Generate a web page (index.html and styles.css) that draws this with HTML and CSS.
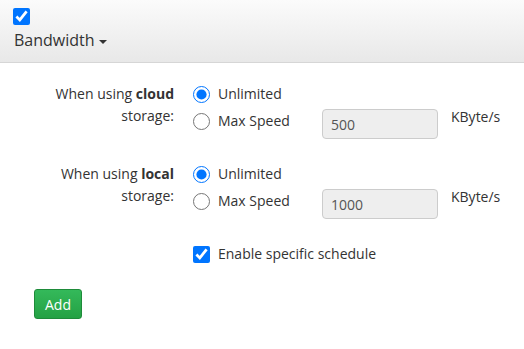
FILE: index.html
```html
<!DOCTYPE html>
<html lang="en">
<head>
    <meta charset="UTF-8">
    <title>Bandwidth</title>
    <link rel="stylesheet" href="styles.css">
</head>
<body>
    <div class="panel-heading">
        <input type="checkbox" class="head-check" checked>
        <div class="panel-title">Bandwidth <span class="caret"></span></div>
    </div>

    <div class="panel-body">
        <div class="form-group">
            <div class="group-label">When using <b>cloud</b><br>storage:</div>
            <div class="group-controls">
                <label class="option"><input type="radio" name="cloud" checked> Unlimited</label>
                <div class="option-row">
                    <label class="option speed"><input type="radio" name="cloud"> Max Speed</label>
                    <input type="text" class="speed-input" value="500" disabled>
                    <span class="unit">KByte/s</span>
                </div>
            </div>
        </div>

        <div class="form-group">
            <div class="group-label">When using <b>local</b><br>storage:</div>
            <div class="group-controls">
                <label class="option"><input type="radio" name="local" checked> Unlimited</label>
                <div class="option-row">
                    <label class="option speed"><input type="radio" name="local"> Max Speed</label>
                    <input type="text" class="speed-input" value="1000" disabled>
                    <span class="unit">KByte/s</span>
                </div>
            </div>
        </div>

        <div class="form-group schedule">
            <div class="group-label"></div>
            <div class="group-controls">
                <label class="option"><input type="checkbox" checked> Enable specific schedule</label>
            </div>
        </div>

        <button class="btn-add">Add</button>
    </div>
</body>
</html>
```

FILE: styles.css
```css
body {
    margin: 0;
    font-family: 'Open Sans', 'Liberation Sans', sans-serif;
    font-size: 14px;
    color: #333;
    background: #fff;
}
.panel-heading {
    height: 63px;
    box-sizing: border-box;
    padding: 7px 13px 0;
    background: linear-gradient(to bottom, #fbfbfb, #e8e8e8);
    border-bottom: 1px solid #d6d6d6;
}
.head-check {
    display: block;
    width: 17px;
    height: 17px;
    margin: 1px 0 0 0;
}
.panel-title {
    font-size: 16px;
    line-height: 22px;
    margin-top: 4px;
    margin-left: 1px;
    color: #333;
}
.caret {
    display: inline-block;
    width: 0;
    height: 0;
    vertical-align: middle;
    border-top: 4px solid #333;
    border-left: 4px solid transparent;
    border-right: 4px solid transparent;
}
.panel-body {
    padding: 20px 0 0 34px;
}
.form-group {
    display: grid;
    grid-template-columns: 140px auto;
    column-gap: 19px;
    margin-bottom: 24px;
}
.form-group.schedule {
    margin-top: 1px;
}
.group-label {
    text-align: right;
    line-height: 22px;
}
.group-label b {
    font-weight: 700;
}
.group-controls {
    display: flex;
    flex-direction: column;
}
.option {
    display: flex;
    align-items: center;
    line-height: 22px;
}
.option input {
    width: 17px;
    height: 17px;
    margin: 0 8px 0 0;
}
.option-row {
    display: flex;
    align-items: flex-start;
}
.option.speed {
    width: 129px;
    padding-top: 5px;
}
.speed-input {
    width: 116px;
    height: 30px;
    box-sizing: border-box;
    margin-top: 4px;
    padding: 0 8px;
    border: 1px solid #ccc;
    border-radius: 4px;
    background: #eee;
    color: #555;
    font-family: inherit;
    font-size: 14px;
}
.unit {
    margin-left: 13px;
    padding-top: 1px;
    line-height: 22px;
}
.btn-add {
    width: 48px;
    height: 30px;
    padding: 0;
    font-family: inherit;
    font-size: 14px;
    color: #fff;
    background: linear-gradient(to bottom, #34b95a, #24a144);
    border: 1px solid #1e8b3a;
    border-radius: 3px;
}
```
